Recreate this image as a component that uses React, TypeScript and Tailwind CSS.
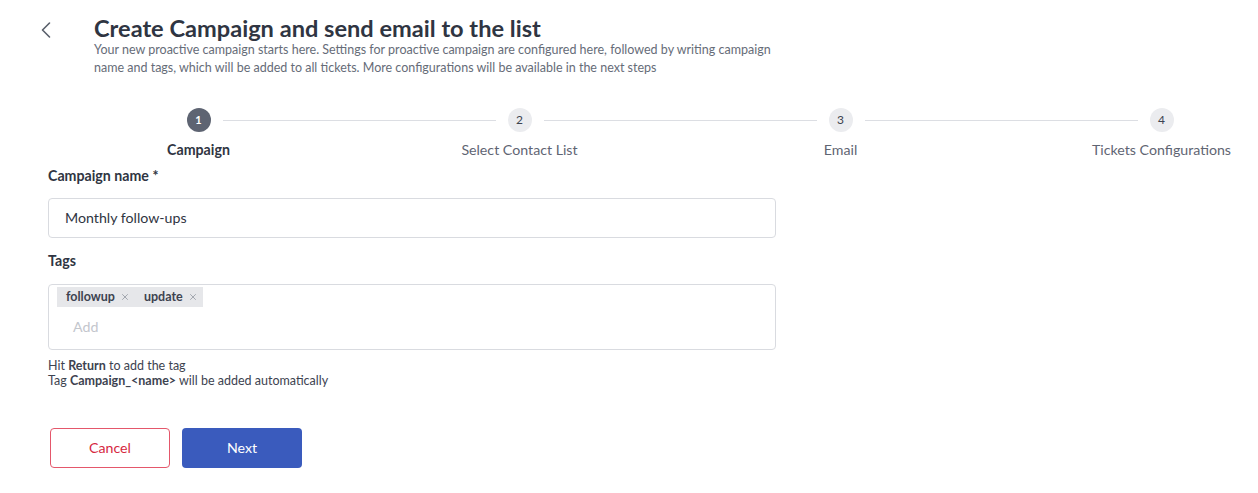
import { ChevronLeft, X } from 'lucide-react'

const FONT = { fontFamily: 'Lato, "Noto Sans", sans-serif' }

const STEPS = ['Campaign', 'Select Contact List', 'Email', 'Tickets Configurations']

function Stepper({ active }: { active: number }) {
  return (
    <div className="mt-[31px] ml-[38px] flex w-[1284px]">
      {STEPS.map((label, i) => {
        const isActive = i === active
        return (
          <div key={label} className="relative flex w-[321px] flex-col items-center">
            {i > 0 && (
              <div className="absolute top-[11.5px] right-[calc(50%+24px)] left-[calc(-50%+24px)] h-px bg-[#dcdee3]" />
            )}
            <div className={isActive
              ? 'flex h-6 w-6 items-center justify-center rounded-full bg-[#5e6472] text-[11px] font-bold text-white'
              : 'flex h-6 w-6 items-center justify-center rounded-full bg-[#ebecef] text-[12px] text-[#3d4350]'}>
              {i + 1}
            </div>
            <div className={isActive
              ? 'mt-2 text-[14.2px] leading-5 font-bold text-[#2f3542]'
              : 'mt-2 text-[14.2px] leading-5 text-[#5f6573]'}>
              {label}
            </div>
          </div>
        )
      })}
    </div>
  )
}

function Tag({ name }: { name: string }) {
  return (
    <span className="flex h-5 items-center gap-[5px] bg-[#e6e7ea] pr-[5px] pl-[9px] text-[12.5px] font-bold text-[#3d4350]">
      {name}
      <X size={10} strokeWidth={1.5} className="text-[#7a808c]" />
    </span>
  )
}

export default function App() {
  return (
    <div className="h-[493px] w-[1258px] overflow-hidden bg-white text-[#2f3542]" style={FONT}>
      {/* header */}
      <div className="flex pt-[16px]">
        <button className="ml-[32px] h-7 w-7 flex items-start justify-center text-[#5a606c]">
          <ChevronLeft size={28} strokeWidth={1.4} />
        </button>
        <div className="ml-[34px]">
          <h1 className="text-[23.6px] leading-[25px] font-bold text-[#2f3542]">Create Campaign and send email to the list</h1>
          <p className="mt-0 w-[690px] text-[12.5px] leading-[18px] text-[#666c78]">
            Your new proactive campaign starts here. Settings for proactive campaign are configured here, followed by writing campaign
            name and tags, which will be added to all tickets. More configurations will be available in the next steps
          </p>
        </div>
      </div>

      <Stepper active={0} />

      {/* form */}
      <div className="ml-[48px] w-[728px]">
        <label className="mt-[6px] block text-[14.2px] leading-5 font-bold text-[#2f3542]">Campaign name *</label>
        <div className="mt-3 flex h-10 items-center rounded border border-[#d9dbe0] px-4 text-[14.2px] text-[#2f3542]">
          Monthly follow-ups
        </div>

        <label className="mt-[13px] block text-[14.2px] leading-5 font-bold text-[#2f3542]">Tags</label>
        <div className="mt-[13px] h-[66px] rounded border border-[#d9dbe0] pt-[2px] pl-2">
          <div className="flex">
            <Tag name="followup" />
            <Tag name="update" />
          </div>
          <div className="mt-[10px] pl-4 text-[14.2px] leading-5 text-[#c3c6cd]">Add</div>
        </div>

        <div className="mt-[8px] text-[12.5px] leading-[15px] text-[#3d4350]">
          <div>Hit <b>Return</b> to add the tag</div>
          <div>Tag <b>Campaign_&lt;name&gt;</b> will be added automatically</div>
        </div>

        <div className="mt-10 ml-[2px] flex gap-3">
          <button className="h-10 w-[120px] rounded border border-[#e4576b] text-[14.2px] text-[#d6283f]">Cancel</button>
          <button className="h-10 w-[120px] rounded bg-[#3a5bbd] text-[14.2px] text-white">Next</button>
        </div>
      </div>
    </div>
  )
}
